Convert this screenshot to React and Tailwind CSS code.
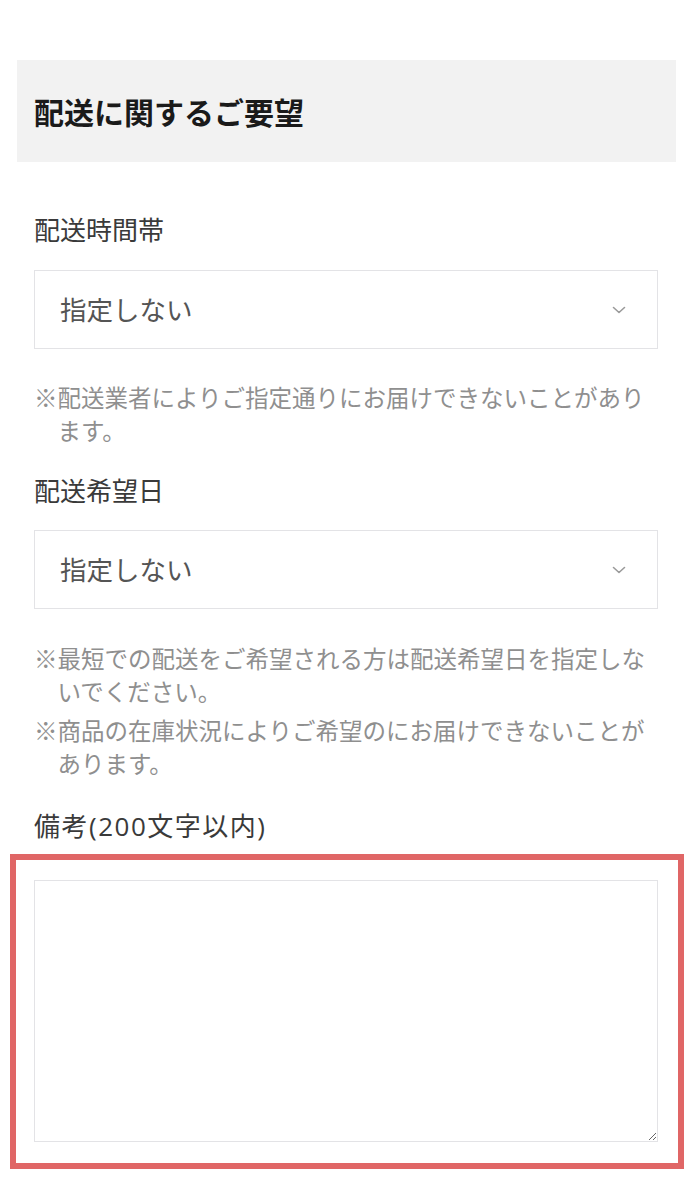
import React from "react";

const font = { fontFamily: '"Noto Sans CJK JP", "Noto Sans", sans-serif' };
const wideLatin = { fontFamily: '"Open Sans", "Noto Sans CJK JP", sans-serif' };

const Chevron = () => (
    <svg width="14" height="8" viewBox="0 0 14 8" fill="none" className="shrink-0">
        <path d="M1.5 1.5 L7 6.5 L12.5 1.5" stroke="#9a9a9a" strokeWidth="1.6" strokeLinecap="round" strokeLinejoin="round" />
    </svg>
);

const SelectBox = () => {
    return (
        <div className="flex items-center justify-between h-[79px] border border-[#e3e3e6] bg-white pl-[25px] pr-[31px]">
            <span className="text-[26.5px] leading-none text-[#555555]">指定しない</span>
            <Chevron />
        </div>
    );
};

const Note = ({ children, className = "" }) => (
    <p className={"text-[23.5px] leading-[33px] text-[#8f8f8f] pl-[1em] -indent-[1em] " + className}>{children}</p>
);

const App = () => {
    return (
        <div className="w-[690px] min-h-[1202px] bg-white" style={font}>
            <div className="pt-[60px] pl-[17px] pr-[14px]">
                <div className="h-[102px] bg-[#f2f2f2] flex items-center px-[17px]">
                    <h2 className="text-[30px] font-bold text-[#1a1a1a]">配送に関するご要望</h2>
                </div>
            </div>

            <div className="pl-[34px] pr-[32px]">
                <div className="mt-[49px] text-[26px] leading-[36px] text-[#3a3a3a]">配送時間帯</div>
                <div className="mt-[23px]">
                    <SelectBox />
                </div>
                <Note className="mt-[32px]">※配送業者によりご指定通りにお届けできないことがあります。</Note>

                <div className="mt-[25px] text-[26px] leading-[36px] text-[#3a3a3a]">配送希望日</div>
                <div className="mt-[22px]">
                    <SelectBox />
                </div>
                <Note className="mt-[33px]">※最短での配送をご希望される方は配送希望日を指定しないでください。</Note>
                <Note className="mt-[6px]">※商品の在庫状況によりご希望のにお届けできないことがあります。</Note>

                <div className="mt-[28px] text-[26px] leading-[36px] tracking-[1.5px] text-[#3a3a3a]" style={wideLatin}>備考(200文字以内)</div>
            </div>

            {/* highlighted textarea */}
            <div className="mt-[10px] ml-[10px] mr-[6px] border-[6px] border-[#e06666] pt-[20px] pb-[21px] pl-[18px] pr-[20px]">
                <textarea className="block w-full h-[262px] border border-[#e3e3e6] bg-white outline-none resize-y" />
            </div>
        </div>
    );
};

export default App;
